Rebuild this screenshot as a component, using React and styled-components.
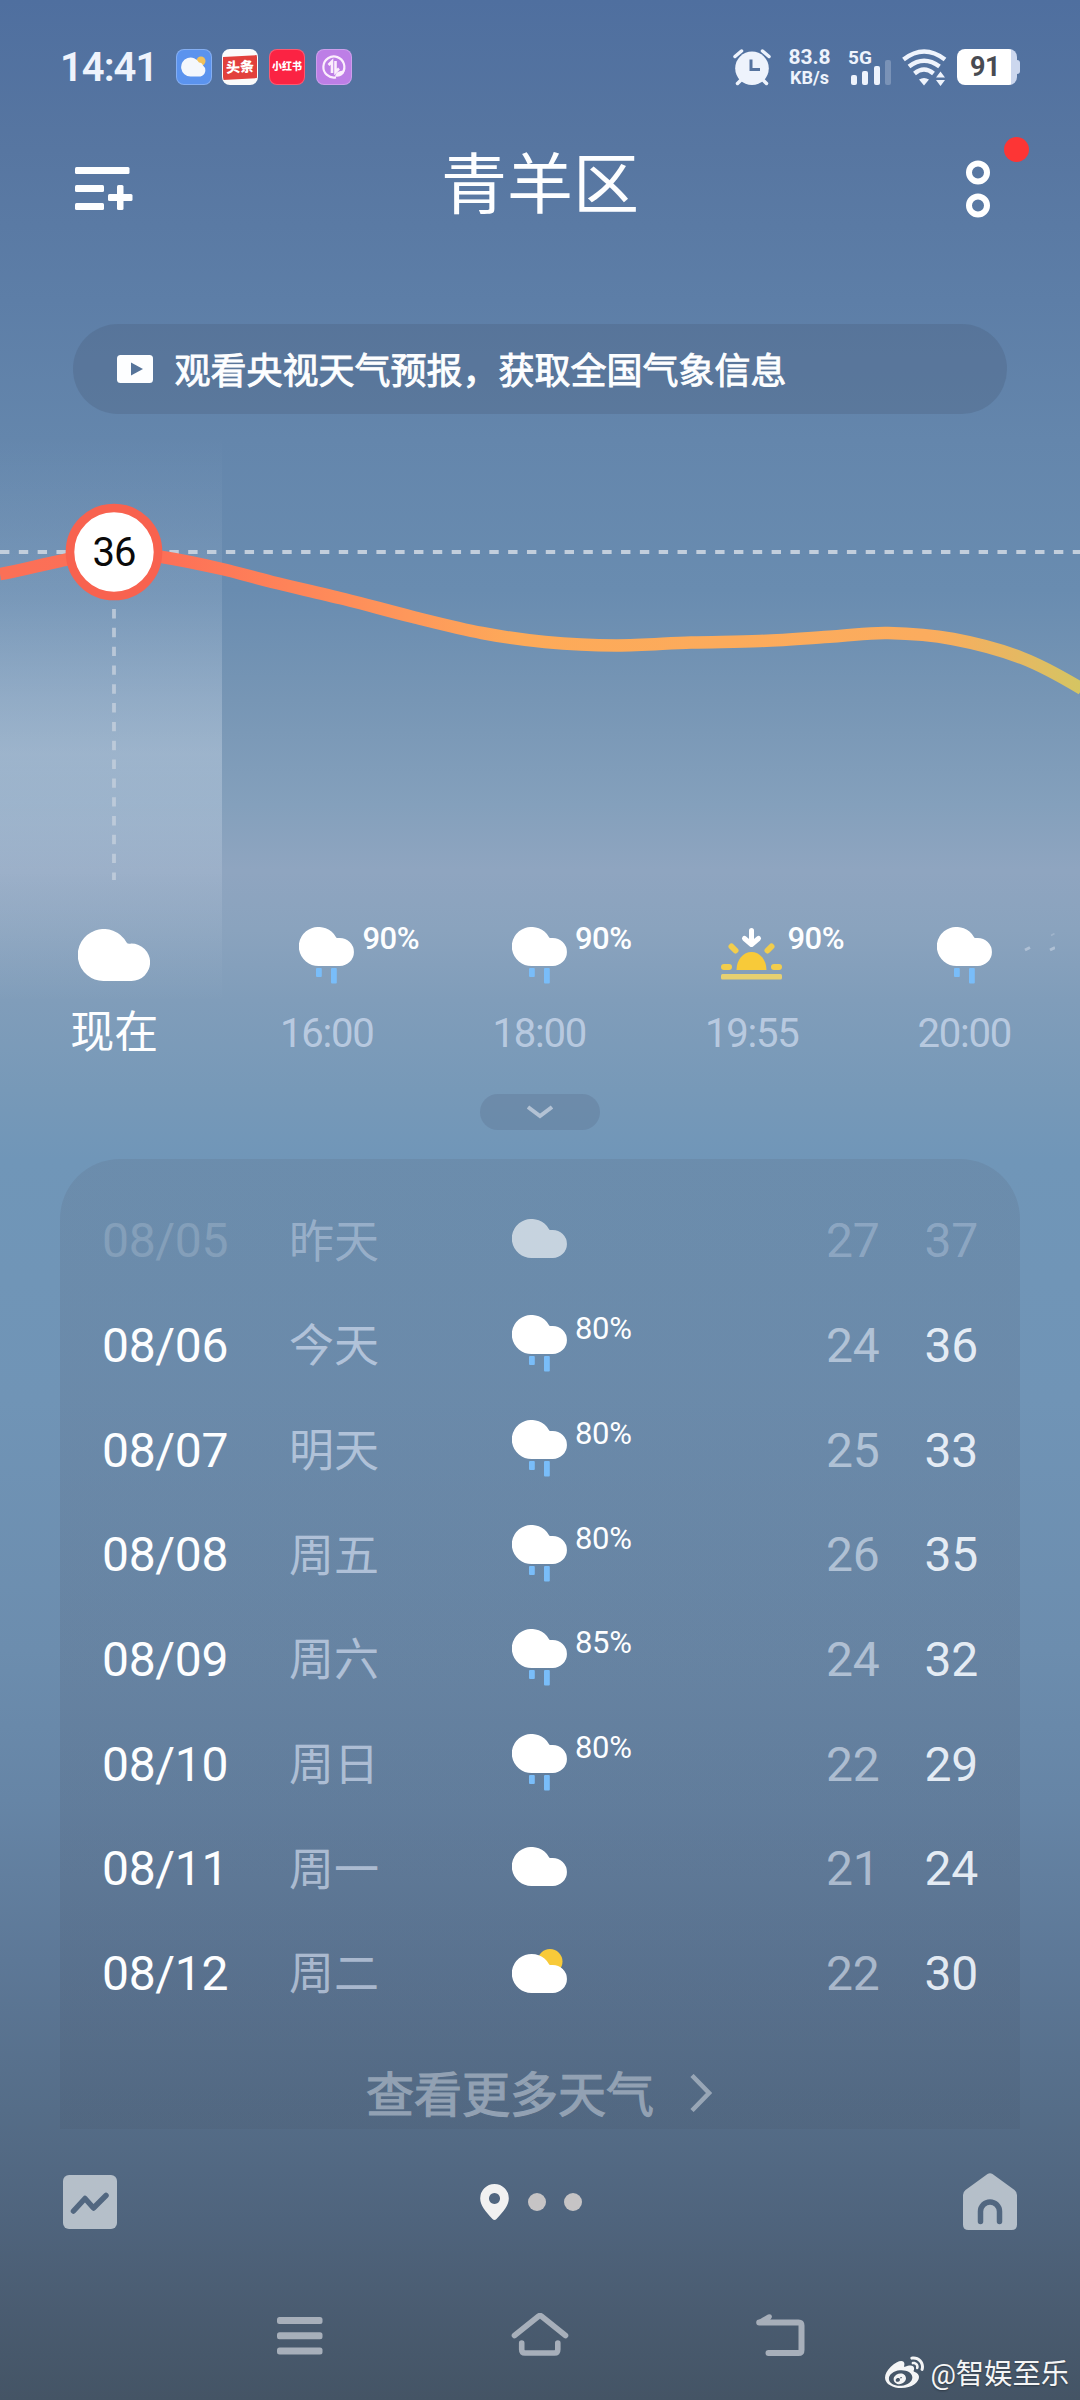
import React from 'react';
import styled, { createGlobalStyle } from 'styled-components';
import { FaWeibo } from 'react-icons/fa';

const fonts = {
  main: `Roboto, 'Noto Sans CJK SC', sans-serif`,
};
const colors = {
  white: '#fdfeff',
  status: '#eef3fc',
  hot: '#f8624f',
  rain: '#79bdf9',
  sun: '#f8ca39',
  nav: '#a7afba',
  tab: '#b5bfc9',
};

const GlobalStyle = createGlobalStyle`
  * {
    box-sizing: border-box;
  }
  body {
    margin: 0;
    font-family: ${fonts.main};
    color: ${colors.white};
  }
  svg {
    display: block;
    flex: none;
  }
`;

const StyledScreen = styled.div`
  position: relative;
  display: flex;
  flex-direction: column;
  width: 1080px;
  height: 2400px;
  overflow: hidden;
  background: linear-gradient(
    #4f6f9f 0px,
    #5776a1 150px,
    #5d7ea7 300px,
    #6486ac 440px,
    #698cb0 590px,
    #7796b5 700px,
    #84a0bc 805px,
    #8fa5c0 870px,
    #8aa3be 930px,
    #809dba 1000px,
    #7799b8 1090px,
    #7096b8 1160px,
    #7094b6 1400px,
    #6c8dae 1650px,
    #6685a6 1800px,
    #5d7897 1960px,
    #556d88 2110px,
    #4f647d 2220px,
    #4a5c71 2310px,
    #445465 2400px
  );
`;

/* status bar */
const StyledStatusBar = styled.div`
  display: flex;
  align-items: center;
  height: 134px;
  padding: 0 60px;
  color: ${colors.status};
`;
const StyledClock = styled.span`
  width: 115.5px;
  padding-top: 2px;
  font-size: 40px;
  font-weight: 600;
  line-height: 40px;
  letter-spacing: -1px;
`;
const StyledApps = styled.div`
  display: flex;
  gap: 10.8px;
`;
const StyledApp = styled.div`
  display: flex;
  align-items: center;
  justify-content: center;
  width: 36px;
  height: 36px;
  overflow: hidden;
  border: 1px solid rgba(255, 255, 255, 0.25);
  border-radius: 8px;
  background: ${({ $bg }) => $bg};
  font-size: ${({ $size }) => $size || 12}px;
  font-weight: 900;
  line-height: 1;
  white-space: nowrap;
  color: #fff;
`;
const StyledRibbon = styled.span`
  flex: none;
  width: 40px;
  padding: 4px 0 5px;
  background: #e2403c;
  font-size: 14px;
  text-align: center;
  transform: rotate(-3deg);
`;
const StyledIndicators = styled.div`
  display: flex;
  align-items: center;
  margin-left: auto;
`;
const StyledSpeed = styled.div`
  display: flex;
  flex-direction: column;
  align-items: center;
  width: 43px;
  margin: 1px 17px 0;
  font-size: 21px;
  font-weight: 700;
  line-height: 19px;
  small {
    font-size: 18px;
    line-height: 21px;
  }
`;
const StyledSignal = styled.div`
  width: 43px;
  margin-right: 11px;
  span {
    display: block;
    height: 16px;
    font-size: 19px;
    font-weight: 700;
    line-height: 17px;
  }
`;
const StyledBars = styled.div`
  display: flex;
  align-items: flex-end;
  gap: 5.3px;
  height: 26px;
  margin: -6px 0 0 3px;
`;
const StyledBar = styled.i`
  width: 6px;
  height: ${({ $height }) => $height}px;
  border-radius: 2px;
  background: ${colors.status};
  opacity: ${({ $off }) => ($off ? 0.25 : 1)};
`;
const StyledBattery = styled.div`
  display: flex;
  align-items: center;
  margin-left: 10px;
  &:after {
    content: '';
    width: 3px;
    height: 14px;
    border-radius: 0 3px 3px 0;
    background: #ccd7ee;
  }
  span {
    width: 60px;
    height: 36px;
    padding-right: 4px;
    border-radius: 8px;
    background: linear-gradient(90deg, #fff 54px, #ccd7ee 54px);
    font-size: 27px;
    font-weight: 700;
    line-height: 37px;
    letter-spacing: -0.5px;
    text-align: center;
    color: #484b52;
  }
`;

/* header */
const StyledHeader = styled.header`
  display: grid;
  grid-template-columns: 1fr auto 1fr;
  align-items: center;
  height: 98px;
  padding: 0 90px 0 75px;
`;
const StyledTitle = styled.h1`
  margin: 6px 0 0 15px;
  font-size: 66px;
  font-weight: 400;
  line-height: 92px;
`;
const StyledMenuButton = styled.div`
  padding-top: 11px;
`;
const StyledMoreButton = styled.div`
  position: relative;
  justify-self: end;
  padding-top: 11px;
`;
const StyledBadge = styled.span`
  position: absolute;
  top: -12px;
  right: -39px;
  width: 25px;
  height: 25px;
  border-radius: 50%;
  background: #fd3535;
`;
const StyledBanner = styled.div`
  display: flex;
  align-items: center;
  height: 90px;
  margin: 92px 73px 0;
  padding-left: 44px;
  border-radius: 45px;
  background: rgba(72, 92, 122, 0.3);
`;
const StyledBannerText = styled.span`
  padding: 5px 0 0 21.5px;
  font-size: 36px;
  line-height: 54px;
  -webkit-text-stroke: 0.9px;
`;

/* hourly forecast */
const StyledHourly = styled.section`
  height: 680px;
  background: linear-gradient(
      rgba(235, 243, 255, 0) 20px,
      rgba(235, 243, 255, 0.06) 110px,
      rgba(235, 243, 255, 0.12) 190px,
      rgba(235, 243, 255, 0.23) 285px,
      rgba(240, 246, 255, 0.27) 340px,
      rgba(235, 243, 255, 0.22) 410px,
      rgba(235, 243, 255, 0.12) 470px,
      rgba(235, 243, 255, 0.05) 530px,
      rgba(235, 243, 255, 0) 590px
    )
    no-repeat 0 0 / 222px 590px;
`;
const StyledHours = styled.div`
  display: flex;
  padding: 27px 0 0 8px;
`;
const StyledHour = styled.div`
  position: relative;
  display: flex;
  flex: none;
  flex-direction: column;
  align-items: center;
  width: 212.5px;
`;
const StyledHourIcon = styled.div`
  height: 83px;
  padding-top: ${({ $offset }) => $offset || 0}px;
`;
const StyledHourLabel = styled.span`
  font-size: ${({ $now }) => ($now ? 44 : 40)}px;
  line-height: 47px;
  letter-spacing: ${({ $now }) => ($now ? 0 : '-1.2px')};
  color: ${({ $now }) => ($now ? colors.white : 'rgba(225, 233, 250, 0.62)')};
`;
const StyledHourChance = styled.span`
  position: absolute;
  top: -6px;
  left: 142px;
  font-size: 31px;
  font-weight: 500;
  line-height: 36px;
  letter-spacing: -0.5px;
`;
const StyledFading = styled.div`
  padding-top: 6px;
  margin-left: -50px;
`;
const StyledToggle = styled.div`
  display: flex;
  flex: none;
  align-items: center;
  justify-content: center;
  align-self: center;
  width: 120px;
  height: 36px;
  border-radius: 18px;
  background: rgba(90, 112, 142, 0.33);
`;

/* daily forecast */
const StyledDaily = styled.section`
  flex: none;
  height: 970px;
  margin: 29px 60px 0;
  padding: 30px 42px 0;
  border-radius: 60px 60px 0 0;
  background: linear-gradient(
    rgba(92, 108, 132, 0.22),
    rgba(84, 100, 124, 0.24) 60%,
    rgba(72, 88, 110, 0.22)
  );
`;
const StyledDay = styled.div`
  display: grid;
  grid-template-columns: 187px 223px 63px 251px 98.5px 54px;
  align-items: center;
  height: 104.66px;
  font-size: 48px;
  line-height: 56px;
  letter-spacing: -0.3px;
`;
const StyledDate = styled.span`
  opacity: ${({ $past }) => ($past ? 0.17 : 1)};
`;
const StyledWeekday = styled.span`
  padding-top: 3px;
  font-size: 45px;
  letter-spacing: 0;
  color: ${({ $past }) => ($past ? 'rgba(225, 233, 250, 0.4)' : 'rgba(225, 233, 250, 0.6)')};
`;
const StyledDayIcon = styled.div`
  padding-bottom: ${({ $lift }) => $lift}px;
  opacity: ${({ $past }) => ($past ? 0.62 : 1)};
`;
const StyledDayChance = styled.span`
  padding-bottom: 33px;
  font-size: 31px;
`;
const StyledLow = styled.span`
  color: ${({ $past }) => ($past ? 'rgba(225, 233, 250, 0.3)' : 'rgba(225, 233, 245, 0.6)')};
`;
const StyledHigh = styled.span`
  color: ${({ $past }) => ($past ? 'rgba(225, 233, 250, 0.3)' : 'rgba(242, 247, 253, 0.92)')};
`;
const StyledMoreDays = styled.div`
  display: flex;
  align-items: center;
  justify-content: center;
  gap: 36px;
  height: 103px;
  padding: 30px 2px 0 0;
  font-size: 48px;
  line-height: 72px;
  color: #92a1b3;
  -webkit-text-stroke: 1.2px;
  span {
    padding-top: 6px;
  }
`;

/* bottom */
const StyledTabs = styled.div`
  display: flex;
  align-items: center;
  justify-content: space-between;
  height: 144px;
  padding: 1px 63px 0;
`;
const StyledPager = styled.div`
  display: flex;
  align-items: center;
  gap: 18.5px;
  margin-right: 18px;
`;
const StyledDot = styled.i`
  width: 18px;
  height: 18px;
  border-radius: 50%;
  background: #c6c4c5;
`;
const StyledNav = styled.nav`
  display: flex;
  align-items: center;
  justify-content: space-between;
  height: 126px;
  padding: 0 275px 0 277px;
`;
const StyledWatermark = styled.div`
  position: absolute;
  right: 11px;
  bottom: 7px;
  display: flex;
  align-items: center;
  gap: 6px;
  font-size: 28.3px;
  line-height: 36px;
  color: #f4f5f6;
  text-shadow: 0 1px 2px rgba(0, 0, 0, 0.35);
  span {
    padding-top: 2px;
  }
`;

const hours = [
  { icon: 'cloud', label: '现在', now: true },
  { icon: 'rain', label: '16:00', chance: '90%' },
  { icon: 'rain', label: '18:00', chance: '90%' },
  { icon: 'sunset', label: '19:55', chance: '90%' },
  { icon: 'rain', label: '20:00' },
];

const days = [
  { date: '08/05', name: '昨天', icon: 'cloud', low: 27, high: 37, past: true },
  { date: '08/06', name: '今天', icon: 'rain', chance: '80%', low: 24, high: 36 },
  { date: '08/07', name: '明天', icon: 'rain', chance: '80%', low: 25, high: 33 },
  { date: '08/08', name: '周五', icon: 'rain', chance: '80%', low: 26, high: 35 },
  { date: '08/09', name: '周六', icon: 'rain', chance: '85%', low: 24, high: 32 },
  { date: '08/10', name: '周日', icon: 'rain', chance: '80%', low: 22, high: 29 },
  { date: '08/11', name: '周一', icon: 'cloud', low: 21, high: 24 },
  { date: '08/12', name: '周二', icon: 'partly', low: 22, high: 30 },
];

const curve = [
  [-50, 163],
  [0, 160],
  [60, 147],
  [114, 138],
  [162, 143],
  [222, 155],
  [272, 168],
  [344, 185],
  [413, 203],
  [482, 219],
  [545, 228],
  [616, 231.5],
  [691, 228.5],
  [760, 227],
  [833, 222.5],
  [888, 219],
  [953, 225],
  [1022, 244],
  [1082, 275],
  [1140, 315],
];

// Catmull-Rom through the points, written as cubic segments
const toPath = points =>
  points.slice(1, -2).reduce((path, [x1, y1], i) => {
    const [x0, y0] = points[i];
    const [x2, y2] = points[i + 2];
    const [x3, y3] = points[i + 3];
    const a = [x1 + (x2 - x0) / 6, y1 + (y2 - y0) / 6];
    const b = [x2 - (x3 - x1) / 6, y2 - (y3 - y1) / 6];
    return `${path} C${a} ${b} ${x2},${y2}`;
  }, `M${points[1]}`);

const cloudPath =
  'M26 52a26 26 0 1 1 22.6-38.4Q49.5 15.3 53.3 14.6A18.7 18.7 0 0 1 53.5 52Z';

const WeatherIcon = ({ type, big }) => {
  if (type === 'sunset') {
    return (
      <svg width="61" height="52" viewBox="0 0 61 52">
        <g fill="none" stroke="#fff" strokeWidth="5" strokeLinecap="round" strokeLinejoin="round">
          <path d="M30.5 2.5V15" />
          <path d="M23.5 10.5L30.5 16.5L37.5 10.5" />
        </g>
        <path d="M15.5 42a15 18 0 0 1 30 0Z" fill={colors.sun} />
        <g stroke="#f2cd4c" strokeWidth="6" strokeLinecap="round">
          <path d="M3 39H8M53 39H58M10.5 18.5L14.5 22.5M50.5 18.5L46.5 22.5" />
        </g>
        <rect y="46" width="61" height="5.5" rx="1.5" fill="#e6d071" />
      </svg>
    );
  }
  if (big) {
    return (
      <svg width="72" height="52" viewBox="0 0 72 52">
        <path d={cloudPath} fill="#fff" />
      </svg>
    );
  }
  const height = { cloud: 39, rain: 57, partly: 44 }[type];
  const top = type === 'partly' ? 5 : 0;
  return (
    <svg width="55" height={height} viewBox={`0 0 55 ${height}`}>
      {type === 'partly' && <circle cx="38" cy="12.5" r="12.5" fill={colors.sun} />}
      <path d={cloudPath} transform={`translate(0 ${top}) scale(0.762 0.75)`} fill="#fff" />
      {type === 'rain' && (
        <g fill={colors.rain}>
          <rect x="17" y="41" width="5.8" height="9" rx="1" />
          <rect x="32" y="41" width="5.8" height="15.5" rx="1" />
        </g>
      )}
    </svg>
  );
};

const StatusBar = () => (
  <StyledStatusBar>
    <StyledClock>14:41</StyledClock>
    <StyledApps>
      <StyledApp $bg="#5b93ee">
        <svg width="26" height="22" viewBox="0 0 26 22">
          <circle cx="20" cy="5" r="4.5" fill="#f0c15c" />
          <path
            d="M9.5 20.5a9.5 9.5 0 1 1 8.500-14Q21 6.500 22 9.500A6.300 6.300 0 0 1 19.500 20.500Z"
            fill="#f4f7fc"
          />
        </svg>
      </StyledApp>
      <StyledApp $bg="#fbfbfb">
        <StyledRibbon>头条</StyledRibbon>
      </StyledApp>
      <StyledApp $bg="#fb2343" $size={10}>
        小红书
      </StyledApp>
      <StyledApp $bg="#bd7ee6">
        <svg width="26" height="26" viewBox="0 0 26 26" fill="none" stroke="#fbeefc">
          <path d="M21.5 19A10.5 10.5 0 1 0 15 23.3" strokeWidth="2.2" />
          <path d="M11 19V7.5L7.5 11M14.5 7V18L18 14.5" strokeWidth="2.6" />
          <path d="M14 22.5Q14.5 16.5 23.5 16.5Q22.5 23.5 14 22.5Z" fill="#fbeefc" stroke="none" />
        </svg>
      </StyledApp>
    </StyledApps>
    <StyledIndicators>
      <svg width="38" height="37" viewBox="0 0 38 37">
        <g stroke={colors.status} strokeWidth="3.5" strokeLinecap="round">
          <path d="M2 7.5L8.5 2M36 7.5L29.5 2M8 31L4.5 34.5M30 31L33.5 34.5" />
        </g>
        <circle cx="19" cy="19.3" r="16.8" fill={colors.status} />
        <path d="M18 10.5V20.5H27" fill="none" stroke="#56749f" strokeWidth="3" />
      </svg>
      <StyledSpeed>
        83.8
        <small>KB/s</small>
      </StyledSpeed>
      <StyledSignal>
        <span>5G</span>
        <StyledBars>
          <StyledBar $height={10} />
          <StyledBar $height={14} />
          <StyledBar $height={19} />
          <StyledBar $height={25} $off />
        </StyledBars>
      </StyledSignal>
      <svg width="45" height="37" viewBox="0 0 45 37">
        <g fill="none" stroke={colors.status} strokeWidth="4.4">
          <path d="M1.5 10.5Q22 -5.5 43 10.5" />
          <path d="M7 17.5Q22 6 37.5 17.5" />
          <path d="M12.5 24.5Q22 16.5 31.5 24.5" />
        </g>
        <path d="M17 30.5Q22 27.5 27 30.5L22 36.5Z" fill={colors.status} />
        <path d="M34 28.5L38.5 22.5L43 28.5ZM34 31L38.5 37L43 31Z" fill={colors.status} />
      </svg>
      <StyledBattery>
        <span>91</span>
      </StyledBattery>
    </StyledIndicators>
  </StyledStatusBar>
);

const Header = () => (
  <StyledHeader>
    <StyledMenuButton>
      <svg width="58" height="43" viewBox="0 0 58 43" fill={colors.white}>
        <rect width="54.5" height="7" rx="1.5" />
        <rect y="18" width="29" height="7" rx="1.5" />
        <rect y="36" width="29" height="7" rx="1.5" />
        <rect x="33" y="27" width="24.5" height="7" rx="1.5" />
        <rect x="42" y="18" width="6.5" height="25" rx="1.5" />
      </svg>
    </StyledMenuButton>
    <StyledTitle>青羊区</StyledTitle>
    <StyledMoreButton>
      <svg width="24" height="58" viewBox="0 0 24 58" fill="none" stroke="#fff" strokeWidth="6">
        <circle cx="12" cy="12.5" r="9" />
        <circle cx="12" cy="45.5" r="9" />
      </svg>
      <StyledBadge />
    </StyledMoreButton>
  </StyledHeader>
);

const TemperatureChart = () => (
  <svg width="1080" height="486" viewBox="0 0 1080 486">
    <defs>
      <linearGradient id="warmth" gradientUnits="userSpaceOnUse" x1="0" y1="0" x2="1080" y2="0">
        <stop offset="0" stopColor="#fb7057" />
        <stop offset="0.15" stopColor="#fd6f57" />
        <stop offset="0.27" stopColor="#fe8459" />
        <stop offset="0.38" stopColor="#fe985b" />
        <stop offset="0.48" stopColor="#fdaa59" />
        <stop offset="0.86" stopColor="#fbac5e" />
        <stop offset="0.94" stopColor="#e6b862" />
        <stop offset="1" stopColor="#d5c562" />
      </linearGradient>
    </defs>
    <g stroke="#c2cedc" strokeWidth="3.8" strokeDasharray="9.4 9.42">
      <path d="M0 138H1080" />
      <path d="M114 195V466" strokeOpacity="0.85" />
    </g>
    <path d={toPath(curve)} fill="none" stroke="url(#warmth)" strokeWidth="12.5" />
    <circle cx="114" cy="138" r="44" fill="#fff" stroke={colors.hot} strokeWidth="8.6" />
    <text x="114" y="152" fontSize="40" letterSpacing="-1" textAnchor="middle" fill="#0a0a0a">
      36
    </text>
  </svg>
);

const iconOffsets = { cloud: 2, rain: 0, sunset: 1 };

const Hourly = () => (
  <StyledHourly>
    <TemperatureChart />
    <StyledHours>
      {hours.map(({ icon, label, chance, now }) => (
        <StyledHour key={label}>
          <StyledHourIcon $offset={iconOffsets[icon]}>
            <WeatherIcon type={icon} big={now} />
          </StyledHourIcon>
          {chance && <StyledHourChance>{chance}</StyledHourChance>}
          <StyledHourLabel $now={now}>{label}</StyledHourLabel>
        </StyledHour>
      ))}
      <StyledFading>
        <svg width="34" height="20" viewBox="0 0 34 20" stroke="#c8d3e2" strokeOpacity="0.6">
          <path d="M4 17L9 14.5M29 17L34 14.5" strokeWidth="3" />
          <path d="M30 2.5L33.5 0.5" strokeWidth="1.5" strokeOpacity="0.35" />
        </svg>
      </StyledFading>
    </StyledHours>
  </StyledHourly>
);

const Daily = () => (
  <StyledDaily>
    {days.map(({ date, name, icon, chance, low, high, past }) => (
      <StyledDay key={date}>
        <StyledDate $past={past}>{date}</StyledDate>
        <StyledWeekday $past={past}>{name}</StyledWeekday>
        <StyledDayIcon $past={past} $lift={icon === 'rain' ? 4 : 5}>
          <WeatherIcon type={icon} />
        </StyledDayIcon>
        <StyledDayChance>{chance}</StyledDayChance>
        <StyledLow $past={past}>{low}</StyledLow>
        <StyledHigh $past={past}>{high}</StyledHigh>
      </StyledDay>
    ))}
    <StyledMoreDays>
      <span>查看更多天气</span>
      <svg width="22" height="38" viewBox="0 0 22 38" fill="none" stroke="#98a6b6">
        <path d="M2 1.5L19 19L2 36.5" strokeWidth="4.5" />
      </svg>
    </StyledMoreDays>
  </StyledDaily>
);

const Tabs = () => (
  <StyledTabs>
    <svg width="54" height="54" viewBox="0 0 54 54">
      <rect width="54" height="54" rx="6" fill={colors.tab} />
      <path
        d="M10.5 36L22 23.5L30.5 33L43 20.5"
        fill="none"
        stroke="#526780"
        strokeWidth="5.5"
        strokeLinecap="round"
        strokeLinejoin="round"
      />
    </svg>
    <StyledPager>
      <svg width="29" height="36" viewBox="0 0 29 36">
        <path
          d="M14.5 0A14.3 14.3 0 0 1 28.8 14.5C28.8 21.5 23.5 27.5 16.5 35Q14.5 36.8 12.5 35C5.5 27.5 0.2 21.5 0.2 14.5A14.3 14.3 0 0 1 14.5 0ZM14.5 9a5.5 5.5 0 1 0 0.01 0Z"
          fill="#f1f1f1"
          fillRule="evenodd"
        />
      </svg>
      <StyledDot />
      <StyledDot />
    </StyledPager>
    <svg width="54" height="57" viewBox="0 0 54 57">
      <path
        d="M24.5 1Q27 -0.7 29.5 1L51.5 17Q54 19 54 22V51.5Q54 57 48.5 57H5.5Q0 57 0 51.5V22Q0 19 2.5 17Z"
        fill={colors.tab}
      />
      <path
        d="M17.5 48.5V38.5a9.5 9.5 0 0 1 19 0V48.5"
        fill="none"
        stroke="#526780"
        strokeWidth="5.5"
        strokeLinecap="round"
      />
    </svg>
  </StyledTabs>
);

const NavBar = () => (
  <StyledNav>
    <svg width="46" height="38" viewBox="0 0 46 38" fill={colors.nav}>
      <rect width="45.5" height="7" rx="2.5" />
      <rect y="15.3" width="45.5" height="7" rx="2.5" />
      <rect y="30.6" width="45.5" height="7" rx="2.5" />
    </svg>
    <svg width="58" height="46" viewBox="0 0 58 46" fill="none" stroke={colors.nav}>
      <g strokeWidth="5.6" strokeLinecap="round" strokeLinejoin="round">
        <path d="M3.5 22.5L27.5 3.2Q29 2 30.5 3.2L54.5 22.5" />
        <path d="M10.7 30V36.5Q10.7 40 14 40H43.5Q46.8 40 46.8 36.5V30" />
      </g>
    </svg>
    <svg width="49" height="44" viewBox="0 0 49 44">
      <path d="M1 7L12 0.5Q15.5 -0.5 16 2.5Q16 4 12 8Z" fill={colors.nav} />
      <path
        d="M3.2 8.5H42.5Q45.5 8.5 45.5 11.5V36Q45.5 39 42.5 39H12.5"
        fill="none"
        stroke={colors.nav}
        strokeWidth="6"
        strokeLinecap="round"
      />
    </svg>
  </StyledNav>
);

const App = () => (
  <StyledScreen>
    <GlobalStyle />
    <StatusBar />
    <Header />
    <StyledBanner>
      <svg width="36" height="28" viewBox="0 0 36 28">
        <rect width="36" height="28" rx="3.5" fill={colors.white} />
        <path d="M14 7.5L26 14L14 20.5Z" fill="#56749a" />
      </svg>
      <StyledBannerText>观看央视天气预报，获取全国气象信息</StyledBannerText>
    </StyledBanner>
    <Hourly />
    <StyledToggle>
      <svg width="26" height="14" viewBox="0 0 26 14" fill="none" stroke="#b3c2d4">
        <path d="M1 2L13 11L25 2" strokeWidth="4" />
      </svg>
    </StyledToggle>
    <Daily />
    <Tabs />
    <NavBar />
    <StyledWatermark>
      <FaWeibo size={39} />
      <span>@智娱至乐</span>
    </StyledWatermark>
  </StyledScreen>
);

export default App;
